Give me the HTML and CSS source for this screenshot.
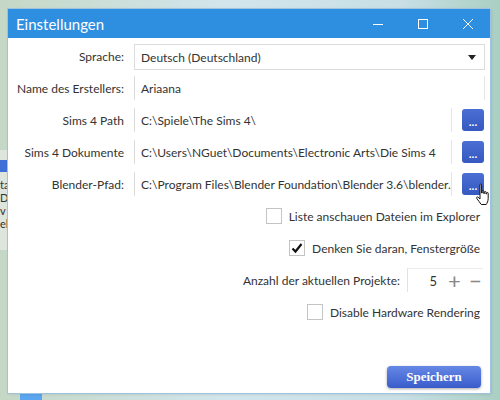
FILE: index.html
```html
<!DOCTYPE html>
<html lang="de">
<head>
    <meta charset="UTF-8">
    <title>Einstellungen</title>
    <link rel="stylesheet" href="styles.css">
</head>
<body>
    <div class="back-window">
        <div class="back-bar"></div>
        <div class="back-text">ta<br>D<br>v<br>el</div>
    </div>
    <div class="task-icon"></div>

    <div class="window">
        <div class="titlebar">
            <span class="title">Einstellungen</span>
            <div class="controls">
                <span class="ctl"><svg width="12" height="12" viewBox="0 0 12 12"><path d="M1 6.5h10" stroke="#fff" stroke-width="1"/></svg></span>
                <span class="ctl"><svg width="12" height="12" viewBox="0 0 12 12"><rect x="1.5" y="1.5" width="9" height="9" fill="none" stroke="#fff" stroke-width="1"/></svg></span>
                <span class="ctl"><svg width="12" height="12" viewBox="0 0 12 12"><path d="M1 1l10 10M11 1L1 11" stroke="#fff" stroke-width="1"/></svg></span>
            </div>
        </div>

        <div class="content">
            <div class="form-grid">
                <label class="lbl">Sprache:</label>
                <div class="combo">
                    <span>Deutsch (Deutschland)</span>
                    <svg width="8" height="5" viewBox="0 0 8 5"><path d="M0 0h8L4 5z" fill="#222"/></svg>
                </div>

                <label class="lbl">Name des Erstellers:</label>
                <div class="field wide">Ariaana</div>

                <label class="lbl">Sims 4 Path</label>
                <div class="path-row">
                    <div class="field">C:\Spiele\The Sims 4\</div>
                    <button class="browse">...</button>
                </div>

                <label class="lbl">Sims 4 Dokumente</label>
                <div class="path-row">
                    <div class="field">C:\Users\NGuet\Documents\Electronic Arts\Die Sims 4</div>
                    <button class="browse">...</button>
                </div>

                <label class="lbl">Blender-Pfad:</label>
                <div class="path-row">
                    <div class="field">C:\Program Files\Blender Foundation\Blender 3.6\blender.exe</div>
                    <button class="browse">...</button>
                </div>
            </div>

            <div class="options">
                <div class="opt">
                    <span class="check"></span>
                    <span>Liste anschauen Dateien im Explorer</span>
                </div>
                <div class="opt">
                    <span class="check"><svg width="14" height="14" viewBox="0 0 14 14"><path d="M2.5 7.5l3 3 6-7.5" fill="none" stroke="#111" stroke-width="2.2"/></svg></span>
                    <span>Denken Sie daran, Fenstergröße</span>
                </div>
                <div class="opt">
                    <span>Anzahl der aktuellen Projekte:</span>
                    <div class="spin">
                        <span class="num">5</span>
                        <span class="pm">+</span>
                        <span class="pm">−</span>
                    </div>
                </div>
                <div class="opt">
                    <span class="check"></span>
                    <span>Disable Hardware Rendering</span>
                </div>
            </div>

            <div class="footer">
                <button class="save">Speichern</button>
            </div>
        </div>

        <svg class="cursor" width="18" height="24" viewBox="0 0 18 24">
            <path d="M5 1.8c0-1 1.6-1 1.6 0V10h.6V8.2c0-1 1.6-1 1.6 0V10.5h.6V9.2c0-1 1.6-1 1.6 0V11h.6V10.2c0-1 1.6-1 1.6 0V15.5c0 2.6-1.2 4.6-2 6H6.3c-1.2-1.6-3-4-4.6-6.2-.6-.9.6-1.9 1.4-1.1L5 16V1.8z" fill="#fff" stroke="#111" stroke-width="1"/>
        </svg>
    </div>
</body>
</html>
```

FILE: styles.css
```css
body {
    margin: 0;
    width: 500px;
    height: 400px;
    overflow: hidden;
    position: relative;
    font-family: 'Lato', 'Noto Sans', sans-serif;
    font-size: 12px;
    color: #333;
    background: linear-gradient(90deg, #c5d8c6 0%, #d2e5ec 45%, #c8dfe6 80%, #aacfc2 100%);
}
.back-window {
    position: absolute;
    left: -60px;
    top: 150px;
    width: 68px;
    height: 100px;
    background: #dde5dc;
    overflow: hidden;
}
.back-bar {
    height: 12px;
    margin-top: 10px;
    background: #3f6fd6;
}
.back-text {
    padding: 6px 0 0 60px;
    font-size: 11px;
    line-height: 13px;
    color: #333;
    white-space: nowrap;
}
.task-icon {
    position: absolute;
    left: 20px;
    top: 394px;
    width: 22px;
    height: 6px;
    background: #5aa6f0;
}
.window {
    position: absolute;
    left: 8px;
    top: 9px;
    width: 482px;
    height: 384px;
    background: #fff;
    box-shadow: 0 0 0 1px #9fc3dc, 1px 1px 3px rgba(0, 0, 0, 0.15);
    display: flex;
    flex-direction: column;
}
.titlebar {
    height: 29px;
    background: #2e8ee0;
    display: flex;
    align-items: center;
    justify-content: space-between;
    flex-shrink: 0;
}
.title {
    color: #fff;
    font-size: 15px;
    padding-left: 8px;
}
.controls {
    display: flex;
    height: 100%;
}
.ctl {
    width: 45px;
    display: flex;
    align-items: center;
    justify-content: center;
}
.content {
    flex: 1;
    display: flex;
    flex-direction: column;
    padding-top: 6px;
}
.form-grid {
    display: grid;
    grid-template-columns: 116px minmax(0, 1fr);
    grid-template-rows: 28px repeat(4, 32px);
    column-gap: 10px;
    padding-right: 5px;
}
.lbl {
    text-align: right;
    align-self: center;
}
.form-grid .lbl:first-child {
    align-self: start;
    line-height: 26px;
}
.combo {
    height: 26px;
    box-sizing: border-box;
    border: 1px solid #dcdcdc;
    display: flex;
    align-items: center;
    justify-content: space-between;
    padding: 0 8px 0 6px;
    align-self: start;
}
.field {
    height: 24px;
    box-sizing: border-box;
    border-left: 1px solid #dadada;
    border-right: 1px solid #e6e6e6;
    padding: 0 6px;
    display: flex;
    align-items: center;
    white-space: nowrap;
    overflow: hidden;
    flex: 1;
    min-width: 0;
}
.field.wide {
    align-self: center;
}
.path-row {
    display: flex;
    align-items: center;
    gap: 10px;
    padding-right: 1px;
    min-width: 0;
}
.browse {
    width: 22px;
    height: 22px;
    flex-shrink: 0;
    border: none;
    border-radius: 3px;
    background: linear-gradient(#4a6fd4, #3658c0);
    color: #fff;
    font-size: 10px;
    font-weight: bold;
    line-height: 14px;
    padding: 4px 0 0;
    font-family: 'Noto Sans', sans-serif;
}
.options {
    display: flex;
    flex-direction: column;
    align-items: flex-end;
    padding-right: 10px;
}
.opt {
    height: 32px;
    display: flex;
    align-items: center;
    gap: 7px;
}
.check {
    width: 16px;
    height: 16px;
    box-sizing: border-box;
    border: 1px solid #c4c4c4;
    display: flex;
    align-items: center;
    justify-content: center;
}
.spin {
    width: 76px;
    height: 24px;
    box-sizing: border-box;
    border-left: 1px solid #e2e2e2;
    border-top: 1px solid #ececec;
    display: flex;
    align-items: center;
    justify-content: flex-end;
    gap: 6px;
    margin-right: -3px;
}
.num {
    margin-right: 4px;
    font-size: 13px;
}
.pm {
    color: #888;
    font-size: 22px;
    line-height: 20px;
    width: 15px;
    text-align: center;
}
.footer {
    margin-top: auto;
    display: flex;
    justify-content: flex-end;
    padding: 0 9px 5px 0;
}
.save {
    width: 94px;
    height: 22px;
    border: none;
    border-radius: 4px;
    background: linear-gradient(#6588e6, #3a5ccb);
    box-shadow: 0 1px 3px rgba(0, 0, 0, 0.35);
    color: #fff;
    font-family: 'Liberation Serif', serif;
    font-weight: bold;
    font-size: 13px;
}
.cursor {
    position: absolute;
    left: 467px;
    top: 174px;
}
```
